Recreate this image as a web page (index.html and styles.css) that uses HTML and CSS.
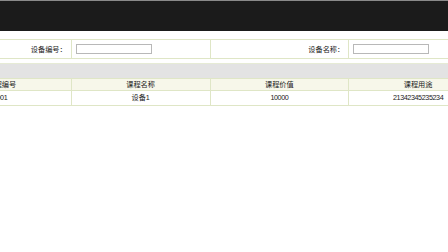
FILE: index.html
```html
<!DOCTYPE html>
<html lang="zh-CN">
<head>
  <meta charset="UTF-8" />
  <title>课程列表</title>
  <link rel="stylesheet" href="styles.css">
</head>
<body>
  <div class="topbar"></div>

  <div class="page">
    <table class="search">
      <tr>
        <td class="label">设备编号：</td>
        <td class="field"><input type="text" id="deviceNo" /></td>
        <td class="label">设备名称：</td>
        <td class="field"><input type="text" id="deviceName" /></td>
      </tr>
    </table>

    <div class="listbox">
      <div class="toolbar"></div>
      <table class="list">
        <thead>
          <tr><th>课程编号</th><th>课程名称</th><th>课程价值</th><th>课程用途</th></tr>
        </thead>
        <tbody>
          <tr><td class="num">001</td><td>设备1</td><td class="num">10000</td><td class="num">21342345235234</td></tr>
        </tbody>
      </table>
    </div>
  </div>
</body>
</html>
```

FILE: styles.css
```css
html, body { margin: 0; padding: 0; overflow: hidden; background: #fff; }
body { font-family: "Liberation Sans", "Noto Sans CJK SC", sans-serif; font-size: 7.2px; color: #1a1a1a; }

.topbar { height: 30px; background: #1b1b1b; border-top: 1px solid #8a8a8a; }

.page { width: 556px; margin-left: -68px; padding-top: 8px; }

table { border-collapse: collapse; width: 556px; table-layout: fixed; }

.search td { height: 18px; border: 1px solid #dfe6c6; padding: 0 4px; }
.search .label { text-align: right; }
.search input { width: 76px; height: 10px; padding: 0; margin: 0; border: 1px solid #b8b8b8; box-sizing: border-box; display: block; }

.listbox { margin-top: 4px; border-top: 1px solid #e6ebd5; }
.toolbar { height: 14px; background: #e3e3e3; }

.list th, .list td { border: 1px solid #dfe6c6; text-align: center; font-weight: normal; padding: 0; line-height: 10px; }
.list th { height: 11px; background: #f7f7ea; }
.list td { height: 14px; }
.list .num { letter-spacing: -0.4px; }
```
